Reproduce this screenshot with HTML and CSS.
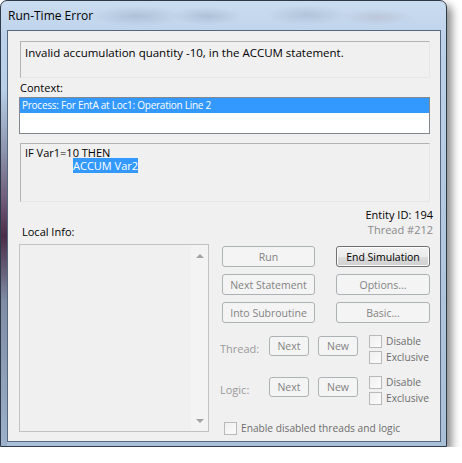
FILE: index.html
```html
<!DOCTYPE html>
<html>
<head>
    <title>Run-Time Error</title>
    <link rel="stylesheet" href="styles.css">
</head>
<body>
    <div class="window">
        <div class="titlebar">
            <span class="title">Run-Time Error</span>
        </div>

        <div class="client">
            <div class="message">Invalid accumulation quantity -10, in the ACCUM statement.</div>

            <div class="label">Context:</div>
            <div class="listbox">
                <div class="row selected">Process: For EntA at Loc1: Operation Line 2</div>
            </div>

            <div class="code">
                <div class="line">IF Var1=10 THEN</div>
                <div class="line indent"><span class="hilite">ACCUM Var2</span></div>
            </div>

            <div class="lower">
                <div class="label local-label">Local Info:</div>
                <div class="entity">
                    <div>Entity ID: 194</div>
                    <div class="thread-id">Thread #212</div>
                </div>

                <div class="local-list">
                    <div class="scroll">
                        <span class="arrow up"></span>
                        <span class="arrow down"></span>
                    </div>
                </div>

                <div class="controls">
                    <div class="buttons">
                        <button type="button" disabled>Run</button>
                        <button type="button" class="default">End Simulation</button>
                        <button type="button" disabled>Next Statement</button>
                        <button type="button" disabled>Options...</button>
                        <button type="button" disabled>Into Subroutine</button>
                        <button type="button" disabled>Basic...</button>
                    </div>

                    <div class="step-row">
                        <span class="step-label">Thread:</span>
                        <button type="button" class="small" disabled>Next</button>
                        <button type="button" class="small" disabled>New</button>
                        <div class="checks">
                            <label class="check"><span class="box"></span>Disable</label>
                            <label class="check"><span class="box"></span>Exclusive</label>
                        </div>
                    </div>

                    <div class="step-row logic">
                        <span class="step-label">Logic:</span>
                        <button type="button" class="small" disabled>Next</button>
                        <button type="button" class="small" disabled>New</button>
                        <div class="checks">
                            <label class="check"><span class="box"></span>Disable</label>
                            <label class="check"><span class="box"></span>Exclusive</label>
                        </div>
                    </div>

                    <label class="check enable"><span class="box"></span>Enable disabled threads and logic</label>
                </div>
            </div>
        </div>
    </div>
</body>
</html>
```

FILE: styles.css
```css
body {
    margin: 0;
    background: #ffffff;
    font-family: "Open Sans", "Noto Sans", sans-serif;
    font-size: 11px;
    color: #000000;
}

/* Cadre de la fenêtre (verre Aero) */

.window {
    width: 447px;
    height: 447px;
    box-sizing: border-box;
    display: flex;
    flex-direction: column;
    padding: 0 5px 4px 6px;
    border: 1px solid #2f3a48;
    border-radius: 7px 7px 0 0;
    background:
        linear-gradient(180deg, transparent 90px, #8d94ad 150px, #6e5a78 200px, #4b2c48 235px, #7f8ca4 300px, #9cb0c9 440px) left top / 6px 100% no-repeat,
        linear-gradient(180deg, #cadcf0 0, #bcd1ea 40px, #b3c8e1 200px, #a9bed7 100%);
    box-shadow: 5px 5px 9px rgba(0, 0, 0, 0.45);
}

.titlebar {
    height: 29px;
    display: flex;
    align-items: center;
    padding-left: 1px;
    background:
        radial-gradient(ellipse 45px 10px at 130px 15px, rgba(130, 150, 175, 0.35), transparent),
        radial-gradient(ellipse 35px 9px at 200px 15px, rgba(120, 140, 165, 0.3), transparent),
        radial-gradient(ellipse 40px 10px at 300px 14px, rgba(130, 150, 175, 0.3), transparent),
        radial-gradient(ellipse 35px 8px at 370px 16px, rgba(165, 145, 155, 0.25), transparent);
}

.title {
    font-size: 12px;
    color: #000000;
}

.client {
    flex: 1;
    background: #f0f0f0;
    border: 1px solid #55677e;
    padding: 10px 10px 0 12px;
}

.message {
    height: 37px;
    box-sizing: border-box;
    padding: 3px 4px;
    font-size: 11.5px;
    line-height: 15px;
    border: 1px solid;
    border-color: #b4b4b4 #e6e6e6 #e6e6e6 #b4b4b4;
}

.label {
    line-height: 14px;
    margin: 3px 0 2px 0;
}

.listbox {
    height: 37px;
    box-sizing: border-box;
    margin-left: -1px;
    background: #ffffff;
    border: 1px solid #828790;
}

.listbox .row {
    height: 15px;
    line-height: 15px;
    padding-left: 2px;
    font-size: 10px;
    letter-spacing: -0.25px;
}

.listbox .row.selected {
    background: #3399ff;
    color: #ffffff;
}

.code {
    height: 59px;
    box-sizing: border-box;
    margin-top: 9px;
    padding: 2px 4px;
    border: 1px solid;
    border-color: #b4b4b4 #e6e6e6 #e6e6e6 #b4b4b4;
}

.code .line {
    line-height: 13px;
}

.code .indent {
    padding-left: 48px;
}

.hilite {
    background: #3399ff;
    color: #ffffff;
}

/* Partie basse : infos locales et commandes */

.lower {
    display: grid;
    grid-template-columns: 189px 1fr;
    column-gap: 11px;
    margin-top: 5px;
}

.local-label {
    align-self: end;
    padding-left: 2px;
    margin: 0 0 -2px 0;
}

.entity {
    text-align: right;
    line-height: 15px;
    margin-right: -3px;
}

.thread-id {
    color: #8a8a8a;
}

.local-list {
    height: 188px;
    box-sizing: border-box;
    width: 190px;
    margin: 7px 0 0 -1px;
    border: 1px solid #c2c2c2;
    display: flex;
    justify-content: flex-end;
}

.scroll {
    width: 17px;
    background: #f3f3f3;
    display: flex;
    flex-direction: column;
    justify-content: space-between;
    align-items: center;
    padding: 9px 0 8px 0;
}

.arrow {
    width: 0;
    height: 0;
    border-left: 4px solid transparent;
    border-right: 4px solid transparent;
}

.arrow.up {
    border-bottom: 4px solid #a3a3a3;
}

.arrow.down {
    border-top: 4px solid #a3a3a3;
}

.controls {
    margin-top: 9px;
}

.buttons {
    display: grid;
    grid-template-columns: 93px 94px;
    column-gap: 21px;
    row-gap: 7px;
    padding-left: 2px;
}

button {
    height: 21px;
    padding: 0;
    font-family: inherit;
    font-size: 10.5px;
    border-radius: 3px;
    border: 1px solid #adb2b5;
    background: #f4f4f4;
    color: #838383;
}

button.default {
    border-color: #707070;
    background: linear-gradient(180deg, #f2f2f2 0%, #ebebeb 50%, #dddddd 51%, #cfcfcf 100%);
    box-shadow: inset 0 0 0 1px #fcfcfc;
    color: #000000;
}

button.small {
    width: 40px;
    height: 20px;
    margin-top: 3px;
}

.step-row {
    display: flex;
    align-items: flex-start;
    margin-top: 10px;
}

.step-row.logic {
    margin-top: 9px;
}

.step-row .small + .small {
    margin-left: 9px;
}

.step-label {
    width: 49px;
    line-height: 32px;
    color: #9a9a9a;
}

.checks {
    margin-left: 11px;
}

.check {
    display: flex;
    align-items: center;
    height: 16px;
    font-size: 10.2px;
    color: #6d6d6d;
}

.box {
    width: 11px;
    height: 11px;
    margin-right: 4px;
    border: 1px solid #b9b9b9;
    background: linear-gradient(135deg, #f0f0f0, #fbfbfb);
}

.check.enable {
    margin: 14px 0 0 4px;
}
```
